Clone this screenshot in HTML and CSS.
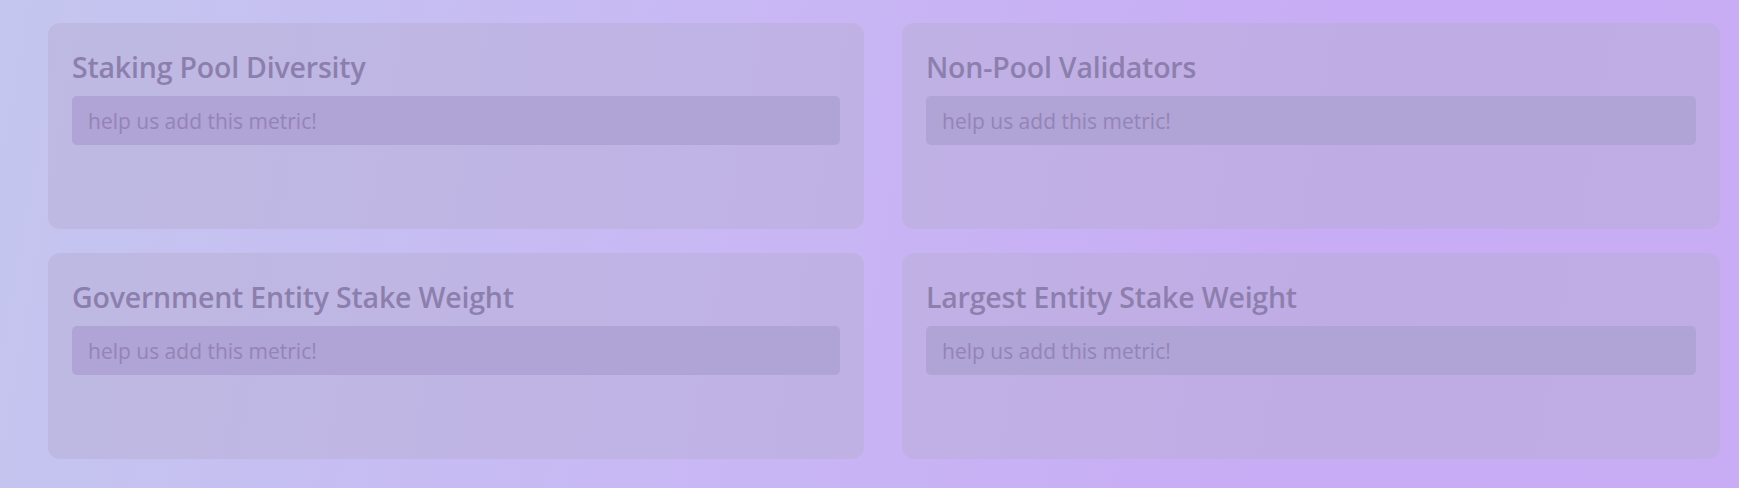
FILE: index.html
```html
<!DOCTYPE html>
<html lang="en">
<head>
<meta charset="utf-8">
<title>Metrics</title>
<link rel="stylesheet" href="styles.css">
</head>
<body>
<main class="grid">
  <section class="card">
    <h2 class="card-title">Staking Pool Diversity</h2>
    <div class="notice">help us add this metric!</div>
  </section>
  <section class="card">
    <h2 class="card-title">Non-Pool Validators</h2>
    <div class="notice">help us add this metric!</div>
  </section>
  <section class="card">
    <h2 class="card-title">Government Entity Stake Weight</h2>
    <div class="notice">help us add this metric!</div>
  </section>
  <section class="card">
    <h2 class="card-title">Largest Entity Stake Weight</h2>
    <div class="notice">help us add this metric!</div>
  </section>
</main>
</body>
</html>
```
FILE: styles.css
```css
html, body {
  margin: 0;
  height: 100%;
}
body {
  background: linear-gradient(100deg, #c4c6ef 0%, #c8b8f4 40%, #c8acf5 75%, #c8adf5 100%);
  font-family: "Open Sans", "Noto Sans", sans-serif;
  overflow: hidden;
}
.grid {
  display: grid;
  grid-template-columns: 816px 818px;
  grid-auto-rows: 206px;
  column-gap: 38px;
  row-gap: 24px;
  padding: 23px 19px 0 48px;
}
.card {
  background: rgba(182, 172, 210, 0.45);
  border-radius: 12px;
  padding: 24px 24px;
  box-sizing: border-box;
}
.card-title {
  margin: 0 0 9px;
  font-size: 28.5px;
  font-weight: 600;
  line-height: 40px;
  color: #8d7fad;
  letter-spacing: -0.2px;
}
.notice {
  background: #b0a3d5;
  border-radius: 5px;
  height: 49px;
  box-sizing: border-box;
  padding: 0 16px;
  display: flex;
  align-items: center;
  font-size: 21px;
  color: #9484b5;
}
```
